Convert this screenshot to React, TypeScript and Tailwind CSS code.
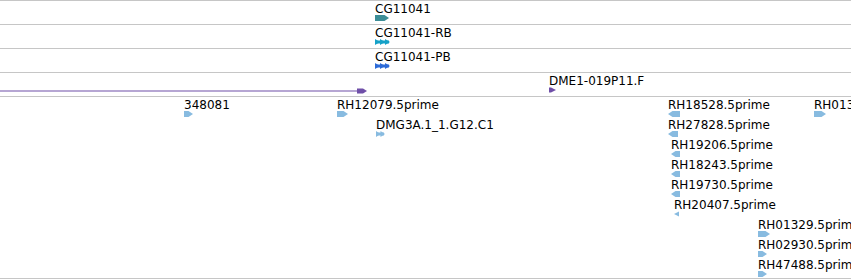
type Glyph = "pent" | "pentL" | "tri3" | "tri2" | "triL" | "flag";

type Feature = {
  label: string;
  x: number;
  row: number;
  glyph: Glyph;
  w: number;
  color: string;
};

const LIGHT = "#88bbe0";
const H = 6;

const shape = (glyph: Glyph, w: number, color: string) => {
  const m = H / 2;
  if (glyph === "pent") {
    const b = Math.max(w - 4.5, 1);
    return <polygon points={`0,0 ${b},0 ${w},${m} ${b},${H} 0,${H}`} fill={color} />;
  }
  if (glyph === "pentL") {
    const b = Math.min(4.5, w - 1);
    return <polygon points={`${w},0 ${b},0 0,${m} ${b},${H} ${w},${H}`} fill={color} />;
  }
  if (glyph === "triL") {
    return <polygon points={`${w},0.5 0,${m} ${w},${H - 0.5}`} fill={color} />;
  }
  if (glyph === "flag") {
    return <polygon points={`0,0.5 2,0.5 ${w},${m} 2,${H - 0.5} 0,${H - 0.5}`} fill={color} />;
  }
  const n = glyph === "tri3" ? 3 : 2;
  const step = w / n;
  return (
    <g fill={color}>
      <rect x={0} y={1.5} width={w - 1} height={3} />
      {Array.from({ length: n }).map((_, i) => (
        <polygon key={i} points={`${i * step},0 ${(i + 1) * step},${m} ${i * step},${H}`} />
      ))}
    </g>
  );
};

const FeatureItem = ({ f }: { f: Feature }) => (
  <div className="absolute flex flex-col items-start" style={{ left: f.x, top: 1 + f.row * 20 }}>
    <div className="text-[12px] leading-[14px] text-black whitespace-nowrap">{f.label}</div>
    <svg width={f.w} height={H} className="block -mt-px">
      {shape(f.glyph, f.w, f.color)}
    </svg>
  </div>
);

const Track = ({ features, children }: { features: Feature[]; children?: React.ReactNode }) => (
  <div className="relative h-[24px] border-t border-[#c6c6c6] overflow-hidden">
    {features.map((f) => (
      <FeatureItem key={f.label} f={f} />
    ))}
    {children}
  </div>
);

const bigTrack: Feature[] = [
  { label: "348081", x: 184, row: 0, glyph: "pent", w: 9, color: LIGHT },
  { label: "RH12079.5prime", x: 337, row: 0, glyph: "pent", w: 11, color: LIGHT },
  { label: "DMG3A.1_1.G12.C1", x: 376, row: 1, glyph: "tri2", w: 9, color: LIGHT },
  { label: "RH18528.5prime", x: 668, row: 0, glyph: "pentL", w: 12, color: LIGHT },
  { label: "RH01329.5prime ", x: 814, row: 0, glyph: "pent", w: 12, color: LIGHT },
  { label: "RH27828.5prime", x: 668, row: 1, glyph: "pentL", w: 10, color: LIGHT },
  { label: "RH19206.5prime", x: 671, row: 2, glyph: "pentL", w: 9, color: LIGHT },
  { label: "RH18243.5prime", x: 671, row: 3, glyph: "pentL", w: 9, color: LIGHT },
  { label: "RH19730.5prime", x: 671, row: 4, glyph: "pentL", w: 9, color: LIGHT },
  { label: "RH20407.5prime", x: 674, row: 5, glyph: "triL", w: 5, color: LIGHT },
  { label: "RH01329.5prime", x: 758, row: 6, glyph: "pent", w: 12, color: LIGHT },
  { label: "RH02930.5prime", x: 758, row: 7, glyph: "pent", w: 9, color: LIGHT },
  { label: "RH47488.5prime", x: 758, row: 8, glyph: "pent", w: 9, color: LIGHT },
];

export default function App() {
  return (
    <div className="w-[851px] h-[280px] bg-white overflow-hidden font-['DejaVu_Sans',sans-serif]">
      <Track features={[{ label: "CG11041", x: 375, row: 0, glyph: "pent", w: 14, color: "#3c8d96" }]} />
      <Track features={[{ label: "CG11041-RB", x: 375, row: 0, glyph: "tri3", w: 15, color: "#16a2c8" }]} />
      <Track features={[{ label: "CG11041-PB", x: 375, row: 0, glyph: "tri3", w: 15, color: "#2d6bd8" }]} />
      <Track features={[{ label: "DME1-019P11.F", x: 549, row: 0, glyph: "flag", w: 7, color: "#6f4fa8" }]}>
        {/* long feature, label off screen */}
        <svg width={368} height={6} className="absolute left-0 top-[15px]">
          <rect x={0} y={2.5} width={358} height={1} fill="#6f4fa8" />
          <polygon points="357,0.5 363,0.5 367,3 363,5.5 357,5.5" fill="#6f4fa8" />
        </svg>
      </Track>
      <div className="relative h-[183px] border-y border-[#c6c6c6] overflow-hidden">
        {bigTrack.map((f) => (
          <FeatureItem key={f.label} f={f} />
        ))}
      </div>
    </div>
  );
}
